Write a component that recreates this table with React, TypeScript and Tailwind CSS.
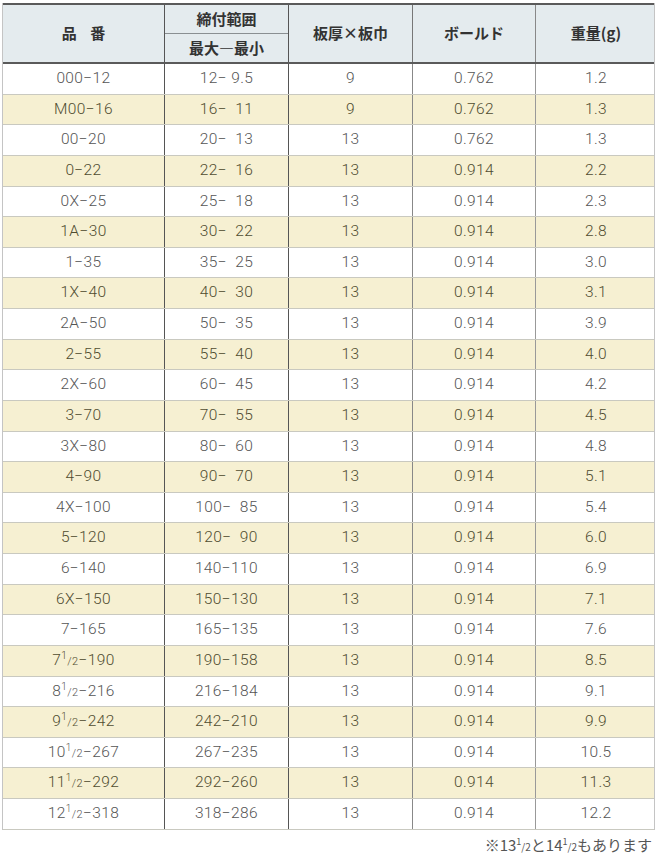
import React from "react";

type Row = { name: React.ReactNode; range: string; t: string; b: string; w: string };

const Frac = ({ a, rest }: { a: string; rest: string }) => (
  <span>
    {a}
    <span className="relative top-[-6px] text-[10px]">1</span>
    <span className="text-[11px]">/2</span>
    {rest}
  </span>
);

const rows: Row[] = [
  { name: "000−12", range: "12− 9.5", t: "9", b: "0.762", w: "1.2" },
  { name: "M00−16", range: "16−  11", t: "9", b: "0.762", w: "1.3" },
  { name: "00−20", range: "20−  13", t: "13", b: "0.762", w: "1.3" },
  { name: "0−22", range: "22−  16", t: "13", b: "0.914", w: "2.2" },
  { name: "0X−25", range: "25−  18", t: "13", b: "0.914", w: "2.3" },
  { name: "1A−30", range: "30−  22", t: "13", b: "0.914", w: "2.8" },
  { name: "1−35", range: "35−  25", t: "13", b: "0.914", w: "3.0" },
  { name: "1X−40", range: "40−  30", t: "13", b: "0.914", w: "3.1" },
  { name: "2A−50", range: "50−  35", t: "13", b: "0.914", w: "3.9" },
  { name: "2−55", range: "55−  40", t: "13", b: "0.914", w: "4.0" },
  { name: "2X−60", range: "60−  45", t: "13", b: "0.914", w: "4.2" },
  { name: "3−70", range: "70−  55", t: "13", b: "0.914", w: "4.5" },
  { name: "3X−80", range: "80−  60", t: "13", b: "0.914", w: "4.8" },
  { name: "4−90", range: "90−  70", t: "13", b: "0.914", w: "5.1" },
  { name: "4X−100", range: "100−  85", t: "13", b: "0.914", w: "5.4" },
  { name: "5−120", range: "120−  90", t: "13", b: "0.914", w: "6.0" },
  { name: "6−140", range: "140−110", t: "13", b: "0.914", w: "6.9" },
  { name: "6X−150", range: "150−130", t: "13", b: "0.914", w: "7.1" },
  { name: "7−165", range: "165−135", t: "13", b: "0.914", w: "7.6" },
  { name: <Frac a="7" rest="−190" />, range: "190−158", t: "13", b: "0.914", w: "8.5" },
  { name: <Frac a="8" rest="−216" />, range: "216−184", t: "13", b: "0.914", w: "9.1" },
  { name: <Frac a="9" rest="−242" />, range: "242−210", t: "13", b: "0.914", w: "9.9" },
  { name: <Frac a="10" rest="−267" />, range: "267−235", t: "13", b: "0.914", w: "10.5" },
  { name: <Frac a="11" rest="−292" />, range: "292−260", t: "13", b: "0.914", w: "11.3" },
  { name: <Frac a="12" rest="−318" />, range: "318−286", t: "13", b: "0.914", w: "12.2" },
];

const cols = "grid grid-cols-[162px_124px_124px_123px_120px]";

export default function App() {
  return (
    <div
      className="w-[656px] h-[856px] bg-white pt-[3px] pl-[2px] overflow-hidden"
      style={{ fontFamily: 'Roboto, "Noto Sans CJK JP", sans-serif' }}
    >
      <div className="w-[653px] border-l border-r border-[#c4c4c4]">
        {/* header */}
        <div
          className={`${cols} h-[61px] bg-[#e4ebee] border-t-2 border-b-2 border-[#5a5a5a] text-[#333] font-bold text-[15px]`}
          style={{ fontFamily: '"Noto Sans CJK JP", sans-serif' }}
        >
          <div className="flex items-center justify-center border-r border-[#555] tracking-[0.9em] pl-[0.9em]">
            品番
          </div>
          <div className="flex flex-col border-r border-[#555]">
            <div className="h-[29px] flex items-center justify-center border-b border-[#8a8f92]">締付範囲</div>
            <div className="flex-1 flex items-center justify-center">最大―最小</div>
          </div>
          <div className="flex items-center justify-center border-r border-[#777]">板厚×板巾</div>
          <div className="flex items-center justify-center border-r border-[#888]">ボールド</div>
          <div className="flex items-center justify-center">重量(g)</div>
        </div>
        {/* body */}
        {rows.map((r, i) => {
          const y = i % 2 === 1;
          return (
            <div
              key={i}
              className={`${cols} h-[30.64px] border-b border-[#c9c9c0] text-[15.5px] font-light tracking-[0.4px] leading-none ${
                y ? "bg-[#f6f0d2] text-[#4f4c30]" : "bg-white text-[#555]"
              }`}
            >
              <div className="flex items-center justify-center border-r border-[#555]">{r.name}</div>
              <div className="flex items-center justify-center border-r border-[#555] whitespace-pre">{r.range}</div>
              <div className="flex items-center justify-center border-r border-[#888]">{r.t}</div>
              <div className="flex items-center justify-center border-r border-[#999]">{r.b}</div>
              <div className="flex items-center justify-center">{r.w}</div>
            </div>
          );
        })}
      </div>
      <div
        className="flex justify-end pr-[4px] mt-[5px] text-[15px] leading-[20px] text-[#555]"
        style={{ fontFamily: '"Noto Sans CJK JP", sans-serif' }}
      >
        <span>
          ※13
          <span className="relative top-[-6px] text-[9px]">1</span>
          <span className="text-[10px]">/2</span>と14
          <span className="relative top-[-6px] text-[9px]">1</span>
          <span className="text-[10px]">/2</span>もあります
        </span>
      </div>
    </div>
  );
}
